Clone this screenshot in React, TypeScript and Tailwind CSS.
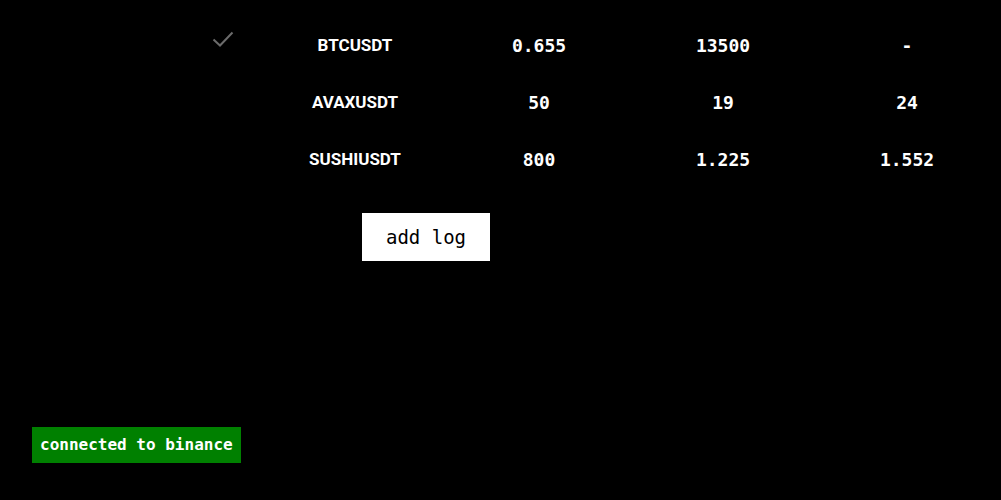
import React from 'react';

const rows = [
  { symbol: 'BTCUSDT', qty: '0.655', entry: '13500', target: '-', done: true },
  { symbol: 'AVAXUSDT', qty: '50', entry: '19', target: '24', done: false },
  { symbol: 'SUSHIUSDT', qty: '800', entry: '1.225', target: '1.552', done: false },
];

const mono = { fontFamily: '"DejaVu Sans Mono", "Liberation Mono", monospace' };

const App = () => {
  return (
    <div className="w-[1001px] h-[500px] bg-black text-white flex flex-col overflow-hidden">
      <div className="pt-[17px]">
        {rows.map((r) => (
          <div key={r.symbol} className="grid grid-cols-[263px_184px_184px_184px_184px] h-[57px] items-center">
            <div className="flex justify-end pr-[29px] self-start pt-[14px]">
              {r.done && (
                <svg width="22" height="16" viewBox="0 0 22 16" fill="none">
                  <path d="M1.5 8.5 L8 14.5 L20.5 1.5" stroke="#6b6b6b" strokeWidth="2" />
                </svg>
              )}
            </div>
            <div className="text-center font-bold text-[17px]" style={{ fontFamily: 'Roboto, "Liberation Sans", sans-serif' }}>
              {r.symbol}
            </div>
            <div className="text-center font-bold text-[18px]" style={mono}>{r.qty}</div>
            <div className="text-center font-bold text-[18px]" style={mono}>{r.entry}</div>
            <div className="text-center font-bold text-[18px]" style={mono}>{r.target}</div>
          </div>
        ))}
      </div>
      <div className="pl-[362px] pt-[25px]">
        <button className="w-[128px] h-[48px] bg-white text-black text-[19px]" style={mono}>
          add log
        </button>
      </div>
      <div className="pl-[32px] pt-[166px]">
        <div className="inline-flex items-center h-[36px] px-[8px] bg-[#008000] text-white font-bold text-[16px]" style={mono}>
          connected to binance
        </div>
      </div>
    </div>
  );
};

export default App;
